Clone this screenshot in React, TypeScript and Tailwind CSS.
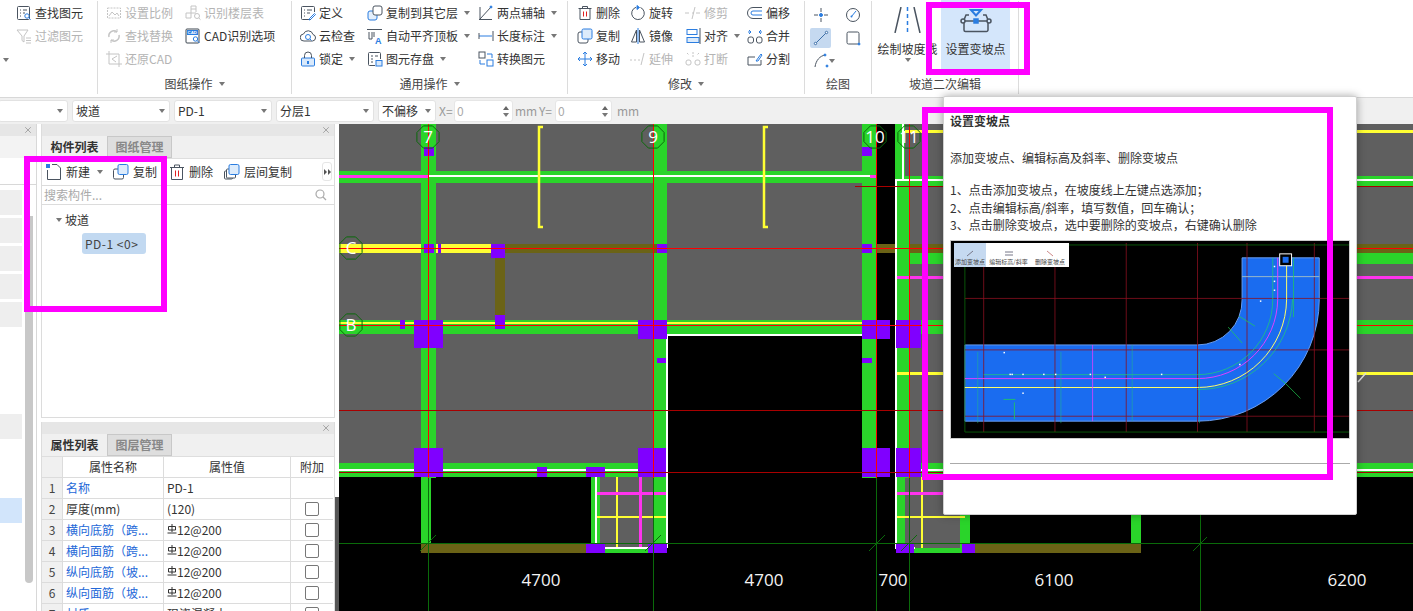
import type { ReactNode } from "react";
import { X } from "lucide-react";

const Caret = ({ className = "" }: { className?: string }) => (
  <span className={`inline-block w-0 h-0 border-x-[3px] border-t-[4px] border-x-transparent border-t-[#777] ${className}`} />
);

const Ic = ({ children }: { children: ReactNode }) => (
  <svg className="w-4 h-4 shrink-0" viewBox="0 0 16 16" fill="none" stroke="#4a5460" strokeWidth="1">
    {children}
  </svg>
);

const OFF = "#c4c4c4";
const BLUE = "#2b7de0";

// ribbon icons
const icons: Record<string, ReactNode> = {
  find: (
    <Ic>
      <rect x="1.5" y="1.5" width="12" height="13" rx="1" />
      <path d="M4 5h1M7 5h4M4 8h1M7 8h2M4 11h1" />
      <circle cx="11" cy="11" r="2.2" stroke={BLUE} />
      <path d="M12.6 12.6l2 2" stroke={BLUE} />
    </Ic>
  ),
  filter: (
    <Ic>
      <path d="M1 2h11L8 8v6l-2-1.5V8z" stroke={OFF} />
      <path d="M10 10h5M10 12.500h5M10 15h5" stroke={OFF} />
    </Ic>
  ),
  scale: (
    <Ic>
      <rect x="1.500" y="3" width="13" height="10" stroke={OFF} strokeDasharray="2 1" />
      <path d="M3 11l3-4 3 3 2-2 2 3" stroke={OFF} />
    </Ic>
  ),
  replace: (
    <Ic>
      <path d="M3 9a5 5 0 0 1 8-5M13 7a5 5 0 0 1-8 5" stroke={OFF} strokeWidth="1.500" />
      <path d="M11 1v3H8M5 15v-3h3" stroke={OFF} />
    </Ic>
  ),
  restore: (
    <Ic>
      <path d="M3 0v13h13M0 3h13v13" stroke={OFF} />
      <path d="M11 5L6 8l4 3" stroke={OFF} />
    </Ic>
  ),
  floors: (
    <Ic>
      <path d="M6 1h5v6M6 1v12H1V8h10M6 4h5" stroke={OFF} />
      <circle cx="12" cy="11" r="2.500" stroke={OFF} />
      <path d="M13.800 13l1.700 1.700" stroke={OFF} />
    </Ic>
  ),
  cad: (
    <Ic>
      <rect x="1" y="1" width="13" height="14" rx="1" stroke="#3c4650" />
      <rect x="2" y="2" width="11" height="5" fill={BLUE} stroke="none" />
      <text x="2.500" y="6.200" fontSize="4.400" fill="#fff" stroke="none" fontFamily="Liberation Sans, sans-serif" fontWeight="700">CAD</text>
      <circle cx="10.500" cy="11" r="2.200" stroke={BLUE} />
      <path d="M12 12.500l2.500 2.500" stroke={BLUE} />
    </Ic>
  ),
  define: (
    <Ic>
      <path d="M11 14.500H2.500a1 1 0 0 1-1-1v-11a1 1 0 0 1 1-1h11a1 1 0 0 1 1 1V7" />
      <path d="M4 5h1M7 5h5M4 8h1M7 8h3M4 11h1" />
      <path d="M9.500 13.500l5-5 1 1-5 5-1.500.5z" stroke={BLUE} />
    </Ic>
  ),
  cloud: (
    <Ic>
      <path d="M4 13a3.500 3.500 0 0 1-.5-7A5 5 0 0 1 13 6.500a3.300 3.300 0 0 1-.5 6.500z" />
      <circle cx="8" cy="9" r="2.500" stroke={BLUE} />
      <path d="M10 11l1.500 1.500" stroke={BLUE} />
    </Ic>
  ),
  lock: (
    <Ic>
      <rect x="1.500" y="7" width="13" height="8" rx="1" fill="#d9e9fb" stroke={BLUE} />
      <path d="M4.500 7V4.500a3.500 3.500 0 0 1 7 0V7" />
      <rect x="7" y="10" width="2" height="3" fill={BLUE} stroke="none" />
    </Ic>
  ),
  copyLayer: (
    <Ic>
      <rect x="1" y="6" width="9" height="9" rx="2" stroke={BLUE} fill="#e3effc" />
      <rect x="6" y="1" width="9" height="9" rx="2" fill="#fff" />
    </Ic>
  ),
  align: (
    <Ic>
      <path d="M0 1.500h15" />
      <path d="M2 4v7h3V4M7 4v5" />
      <text x="8" y="15.500" fontSize="9" fill={BLUE} stroke="none" fontWeight="700" fontFamily="Liberation Sans, sans-serif">A</text>
    </Ic>
  ),
  save: (
    <Ic>
      <path d="M8 14.500H2.500a1 1 0 0 1-1-1v-11a1 1 0 0 1 1-1h10a1 1 0 0 1 1 1V8" />
      <path d="M4 5h2M8 5h3M4 8h2M4 11h2" />
      <rect x="9" y="9.500" width="6" height="5.500" stroke={BLUE} fill="#d9e9fb" />
    </Ic>
  ),
  axis: (
    <Ic>
      <path d="M2 14L13 2M1 14.500h13M2 2v12" />
      <circle cx="13" cy="2" r="1" fill={BLUE} stroke={BLUE} />
    </Ic>
  ),
  dim: (
    <Ic>
      <path d="M1 8h13" stroke={BLUE} />
      <path d="M1 5v6M15 3v10" />
    </Ic>
  ),
  convert: (
    <Ic>
      <rect x="1" y="1" width="6" height="6" />
      <rect x="9" y="9" width="6" height="6" stroke={BLUE} />
      <path d="M9 3h5v4M7 13H2V9" stroke={BLUE} />
    </Ic>
  ),
  del: (
    <Ic>
      <path d="M1.500 3.500h13M5.500 3.500V1.500h5v2M3 3.500v11h10v-11" />
      <path d="M6.500 6.500v5M9.500 6.500v5" stroke="#e02020" />
    </Ic>
  ),
  copy: (
    <Ic>
      <rect x="1" y="4" width="10" height="11" rx="2" />
      <rect x="5" y="1" width="10" height="10" rx="1.500" stroke={BLUE} fill="#dcebfb" />
    </Ic>
  ),
  move: (
    <Ic>
      <path d="M8 1v14M1 8h14M6 3l2-2 2 2M6 13l2 2 2-2M3 6L1 8l2 2M13 6l2 2-2 2" stroke={BLUE} />
    </Ic>
  ),
  rotate: (
    <Ic>
      <path d="M6 2.300A6.300 6.300 0 1 0 10.500 2.500" />
      <path d="M7 0.500v4L9.500 2.500z" fill={BLUE} stroke={BLUE} />
    </Ic>
  ),
  mirror: (
    <Ic>
      <path d="M6.500 2L1.500 14h5zM9.500 2l5 12h-5z" />
      <path d="M8 0v16" stroke={BLUE} />
    </Ic>
  ),
  extend: (
    <Ic>
      <path d="M0 9h2M4 9h2M8 9h2" stroke={OFF} />
      <path d="M11 14l3-12" stroke={OFF} />
    </Ic>
  ),
  trim: (
    <Ic>
      <path d="M0 8h4M7 8h2M11 8h4" stroke={OFF} />
      <path d="M7 14l3-12" stroke={OFF} />
    </Ic>
  ),
  alignB: (
    <Ic>
      <rect x="2" y="1.500" width="10" height="5" stroke={BLUE} />
      <rect x="2" y="9.500" width="12" height="5" stroke={BLUE} fill="#dcebfb" />
      <path d="M15 0v16" stroke="#4a5460" />
    </Ic>
  ),
  breakI: (
    <Ic>
      <rect x="1" y="9" width="5" height="5" rx="2" stroke={OFF} />
      <rect x="10" y="9" width="5" height="5" rx="2" stroke={OFF} />
      <path d="M2 2l2 2M14 2l-2 2M8 1v6" stroke={OFF} strokeDasharray="2 1" />
    </Ic>
  ),
  offset: (
    <Ic>
      <path d="M15 2.500H6a5.500 5.500 0 0 0 0 11h9" />
      <path d="M15 6H6a2 2 0 0 0 0 4h9" stroke={BLUE} />
    </Ic>
  ),
  merge: (
    <Ic>
      <rect x="1" y="9" width="5.500" height="6" rx="2" />
      <rect x="9.500" y="9" width="5.500" height="6" rx="2" />
      <path d="M2 2l2 2-2 2M14 2l-2 2 2 2M4 4H1M12 4h3" stroke={BLUE} />
    </Ic>
  ),
  split: (
    <Ic>
      <path d="M14 9v5H1V6h7" />
      <path d="M9 10l5-7 1 1-4 6z" stroke={BLUE} />
    </Ic>
  ),
};

const Item = ({ icon, label, caret, off }: { icon: string; label: string; caret?: boolean; off?: boolean }) => (
  <div className={`flex items-center h-[23px] whitespace-nowrap ${off ? "text-[#b4b4b4]" : "text-[#333]"}`}>
    {icons[icon]}
    <span className="ml-[3px]">{label}</span>
    {caret && <Caret className="ml-[6px]" />}
  </div>
);

const GroupLabel = ({ text, caret = true }: { text: string; caret?: boolean }) => (
  <div className="absolute left-0 right-0 bottom-[1px] flex items-center justify-center gap-[6px] text-[#444]">
    <span>{text}</span>
    {caret && <Caret />}
  </div>
);

const Group = ({ width, children, label, caret }: { width: string; children: ReactNode; label: string; caret?: boolean }) => (
  <div className={`relative h-[93px] mt-[1px] border-r border-[#dcdcdc] ${width}`}>
    {children}
    {label && <GroupLabel text={label} caret={caret} />}
  </div>
);

function Ribbon() {
  return (
    <div className="flex h-[98px] bg-white border-b border-[#d8d8d8] shrink-0">
      <Group width="w-[98px]" label="">
        <div className="pl-[16px]">
          <Item icon="find" label="查找图元" />
          <Item icon="filter" label="过滤图元" off />
          <Caret className="absolute left-[3px] top-[57px]" />
        </div>
      </Group>
      <Group width="w-[194px]" label="图纸操作">
        <div className="flex pl-[8px]">
          <div className="w-[79px]">
            <Item icon="scale" label="设置比例" off />
            <Item icon="replace" label="查找替换" off />
            <Item icon="restore" label="还原CAD" off />
          </div>
          <div>
            <Item icon="floors" label="识别楼层表" off />
            <Item icon="cad" label="CAD识别选项" />
          </div>
        </div>
      </Group>
      <Group width="w-[276px]" label="通用操作">
        <div className="flex pl-[8px]">
          <div className="w-[67px]">
            <Item icon="define" label="定义" />
            <Item icon="cloud" label="云检查" />
            <Item icon="lock" label="锁定" caret />
          </div>
          <div className="w-[111px]">
            <Item icon="copyLayer" label="复制到其它层" caret />
            <Item icon="align" label="自动平齐顶板" caret />
            <Item icon="save" label="图元存盘" caret />
          </div>
          <div>
            <Item icon="axis" label="两点辅轴" caret />
            <Item icon="dim" label="长度标注" caret />
            <Item icon="convert" label="转换图元" />
          </div>
        </div>
      </Group>
      <Group width="w-[237px]" label="修改">
        <div className="flex pl-[9px]">
          <div className="w-[53px]">
            <Item icon="del" label="删除" />
            <Item icon="copy" label="复制" />
            <Item icon="move" label="移动" />
          </div>
          <div className="w-[55px]">
            <Item icon="rotate" label="旋转" />
            <Item icon="mirror" label="镜像" />
            <Item icon="extend" label="延伸" off />
          </div>
          <div className="w-[62px]">
            <Item icon="trim" label="修剪" off />
            <Item icon="alignB" label="对齐" caret />
            <Item icon="breakI" label="打断" off />
          </div>
          <div>
            <Item icon="offset" label="偏移" />
            <Item icon="merge" label="合并" />
            <Item icon="split" label="分割" />
          </div>
        </div>
      </Group>
      <Group width="w-[67px]" label="绘图" caret={false}>
        <div className="grid grid-cols-[21px_21px] gap-x-[11px] pl-[5px] pt-[2px]">
          <div className="h-[23px] flex items-center justify-center">
            <svg className="w-4 h-4" viewBox="0 0 16 16" fill="none" stroke="#4a5460">
              <path d="M8 1v4M8 11v4M1 8h4M11 8h4" />
              <circle cx="8" cy="8" r="1.500" fill={BLUE} stroke={BLUE} />
            </svg>
          </div>
          <div className="h-[23px] flex items-center justify-center">
            <svg className="w-4 h-4" viewBox="0 0 16 16" fill="none" stroke="#4a5460">
              <circle cx="8" cy="8" r="6.500" />
              <path d="M6.500 9.500L11 4" stroke={BLUE} />
              <circle cx="6.500" cy="9.500" r="1" fill={BLUE} stroke="none" />
            </svg>
          </div>
          <div className="h-[20px] mt-[2px] mb-[1px] flex items-center justify-center bg-[#c5d9f0] rounded-[2px]">
            <svg className="w-4 h-4" viewBox="0 0 16 16" fill="none" stroke="#3d6fa8">
              <path d="M2.500 13.500l11-11" />
              <circle cx="2.500" cy="13.500" r="1.200" fill="#fff" />
              <circle cx="13.500" cy="2.500" r="1.200" fill="#fff" />
            </svg>
          </div>
          <div className="h-[23px] flex items-center justify-center">
            <svg className="w-4 h-4" viewBox="0 0 16 16" fill="none" stroke="#4a5460">
              <rect x="2" y="2" width="12" height="12" rx="1.500" />
              <circle cx="14" cy="14" r="1" fill={BLUE} stroke={BLUE} />
            </svg>
          </div>
          <div className="relative h-[23px] flex items-center justify-center">
            <svg className="w-4 h-4" viewBox="0 0 16 16" fill="none" stroke="#4a5460">
              <path d="M2 14C3 7 7 3 12 2" />
              <circle cx="12" cy="2" r="1" fill={BLUE} stroke={BLUE} />
              <circle cx="14" cy="13" r="1" fill={BLUE} stroke={BLUE} />
            </svg>
            <Caret className="absolute -right-[4px] top-[10px]" />
          </div>
        </div>
      </Group>
      <Group width="w-[147px]" label="坡道二次编辑" caret={false}>
        <div className="flex pl-[2px]">
          <div className="w-[67px] flex flex-col items-center pt-[6px]">
            <svg className="w-[28px] h-[26px]" viewBox="0 0 28 26" fill="none" stroke="#4a5460" strokeWidth="1.500">
              <path d="M7 0L1 26M20 0L26 26" />
              <path d="M13.500 0v26" stroke={BLUE} strokeDasharray="4 3" />
            </svg>
            <span className="mt-[8px] text-[#333] leading-[16px]">绘制坡度线</span>
            <Caret className="mt-[1px]" />
          </div>
          <div className="w-[69px] h-[70px] -mt-[1px] bg-[#d4e6fb] flex flex-col items-center pt-[7px]">
            <svg className="w-[32px] h-[26px]" viewBox="0 0 32 26" fill="none" stroke="#4a5460" strokeWidth="1.500">
              <path d="M11 3h10l-5 5.500z" fill="#d4e6fb" stroke={BLUE} strokeWidth="2" />
              <path d="M9 8H6L4 13v10a1.500 1.500 0 0 0 1.500 1.500h21A1.500 1.500 0 0 0 28 23V13L26 8h-3" />
              <path d="M4 14h24" />
              <circle cx="3" cy="14" r="2" fill="#d4e6fb" />
              <circle cx="29" cy="14" r="2" fill="#d4e6fb" />
              <rect x="14" y="12" width="4" height="4" fill={BLUE} stroke={BLUE} />
            </svg>
            <span className="mt-[8px] text-[#333] leading-[16px]">设置变坡点</span>
          </div>
        </div>
      </Group>
    </div>
  );
}

const Combo = ({ width, text }: { width: string; text: string }) => (
  <div className={`h-[22px] bg-white border border-[#e2e2e2] rounded-[3px] flex items-center justify-between px-[3px] text-[#333] ${width}`}>
    <span className="whitespace-nowrap">{text}</span>
    <Caret className="mr-[1px] border-t-[#555]" />
  </div>
);

const Spin = ({ width }: { width: string }) => (
  <div className={`h-[22px] bg-white border border-[#e6e6e6] rounded-[3px] flex items-center justify-between pl-[2px] pr-[3px] text-[#aaa] ${width}`}>
    <span>0</span>
    <span className="flex flex-col gap-[3px]">
      <span className="w-0 h-0 border-x-[3px] border-b-[4px] border-x-transparent border-b-[#666]" />
      <Caret className="border-t-[#666]" />
    </span>
  </div>
);

function OptionsBar() {
  return (
    <div className="flex items-center h-[26px] bg-[#f0f0f0] shrink-0 text-[#999]">
      <Combo width="w-[70px] -ml-[2px]" text="" />
      <Combo width="w-[98px] ml-[4px]" text="坡道" />
      <Combo width="w-[98px] ml-[4px]" text="PD-1" />
      <Combo width="w-[98px] ml-[4px]" text="分层1" />
      <Combo width="w-[58px] ml-[4px]" text="不偏移" />
      <span className="ml-[3px] w-[15px]">X=</span>
      <Spin width="w-[59px]" />
      <span className="ml-[2px] w-[24px]">mm</span>
      <span className="w-[16px]">Y=</span>
      <Spin width="w-[57px]" />
      <span className="ml-[5px]">mm</span>
    </div>
  );
}

const PanelHead = () => (
  <div className="h-[12px] bg-[#e6e6e6] flex items-center justify-end pr-[3px]">
    <X className="w-[10px] h-[10px] text-[#999]" strokeWidth={2} />
  </div>
);

const Tabs = ({ a, b }: { a: string; b: string }) => (
  <div className="h-[23px] bg-[#f0f0f0] flex border-b border-[#dedede]">
    <div className="w-[65px] font-bold text-[#333] flex items-center justify-center">{a}</div>
    <div className="w-[65px] bg-[#dedede] border border-[#c8c8c8] text-[#888] font-bold flex items-center justify-center">{b}</div>
  </div>
);

const LEFT_ROWS = ["mt-[5px]", "mt-[3px]", "mt-[3px]", "mt-[3px]", "mt-[3px]"];

function LeftPanel() {
  return (
    <div className="w-[37px] border-r border-[#d8d8d8] shrink-0 h-full">
      <PanelHead />
      <div className="h-[22px] bg-[#f3f3f3]" />
      <div className="h-[27px] bg-white border-b border-[#d8d8d8]" />
      <div className="flex">
        <div className="w-[22px]">
          {LEFT_ROWS.map((m, i) => (
            <div key={i} className={`h-[25px] bg-[#eeeeee] ${m}`} />
          ))}
          <div className="h-[25px] bg-[#eeeeee] mt-[87px]" />
          <div className="h-[25px] bg-[#d2e5fb] mt-[59px]" />
        </div>
        <div className="w-[8px] h-[367px] ml-[3px] mt-[31px] bg-[#c8c8c8] rounded-b-[4px]" />
      </div>
    </div>
  );
}

function ListPanel() {
  return (
    <div className="h-[294px] flex flex-col border-x border-b border-[#dcdcdc]">
      <PanelHead />
      <Tabs a="构件列表" b="图纸管理" />
      <div className="relative h-[27px] flex items-center pl-[4px] border-b border-[#dcdcdc] text-[#333] whitespace-nowrap">
        <svg className="w-[16px] h-[16px]" viewBox="0 0 16 16" fill="none" stroke="#4a5460">
          <path d="M1.500 6v9.500h13V4L11 .5H6" />
          <rect x="0" y="0" width="4" height="4" fill={BLUE} stroke="none" />
        </svg>
        <span className="ml-[4px]">新建</span>
        <Caret className="ml-[7px]" />
        <svg className="w-[16px] h-[16px] ml-[10px]" viewBox="0 0 16 16" fill="none" stroke="#4a5460">
          <rect x="0.500" y="5" width="10" height="10" rx="1.500" />
          <rect x="5" y="0.500" width="10" height="10" rx="1.500" stroke={BLUE} fill="#dcebfb" />
        </svg>
        <span className="ml-[4px]">复制</span>
        <svg className="w-[14px] h-[16px] ml-[13px]" viewBox="0 0 14 16" fill="none" stroke="#4a5460">
          <path d="M0 3.500h14M4.500 3.500V1h5v2.500M1.500 3.500v12h11v-12" />
          <path d="M5.500 6.500v6M8.500 6.500v6" stroke="#e02020" />
        </svg>
        <span className="ml-[5px]">删除</span>
        <svg className="w-[16px] h-[16px] ml-[11px]" viewBox="0 0 16 16" fill="none" stroke="#4a5460">
          <rect x="0.500" y="7" width="8" height="8" rx="1" />
          <rect x="2.500" y="5" width="9" height="9" rx="1" fill="#fff" />
          <rect x="5" y="0.500" width="10" height="10" rx="1.500" stroke={BLUE} fill="#dcebfb" />
        </svg>
        <span className="ml-[4px]">层间复制</span>
        <div className="absolute right-[2px] top-[3px] w-[10px] h-[19px] bg-white border border-[#e6e6e6] rounded-[3px] flex items-center justify-center gap-[1px]">
          <span className="w-0 h-0 border-y-[3px] border-l-[3px] border-y-transparent border-l-[#555]" />
          <span className="w-0 h-0 border-y-[3px] border-l-[3px] border-y-transparent border-l-[#555]" />
        </div>
      </div>
      <div className="h-[19px] flex items-center justify-between pl-[2px] pr-[7px] border-b border-[#dcdcdc] text-[#aaa] whitespace-nowrap">
        <span>搜索构件...</span>
        <svg className="w-[12px] h-[12px]" viewBox="0 0 12 12" fill="none" stroke="#aaa" strokeWidth="1.200">
          <circle cx="5" cy="5" r="4" />
          <path d="M8 8l3 3" />
        </svg>
      </div>
      <div className="flex items-center h-[17px] mt-[6px] pl-[14px] text-[#333]">
        <Caret className="mr-[3px]" />
        <span>坡道</span>
      </div>
      <div className="mt-[5px] ml-[40px] w-[64px] h-[21px] bg-[#c2d9f1] rounded-[3px] flex items-center pl-[3px] text-[#444] whitespace-pre tracking-[0.5px]">
        PD-1 &lt;0&gt;
      </div>
    </div>
  );
}

const Rebar = () => (
  <svg className="w-[10px] h-[10px] -mt-[3px] mr-[0px]" viewBox="0 0 10 10" fill="none" stroke="#333">
    <path d="M1.500 6V2.500h7V6zM5 0v8M0.500 9h9" />
  </svg>
);

const rows: { name: string; value: string; link: boolean; rebar?: boolean; box: boolean }[] = [
  { name: "名称", value: "PD-1", link: true, box: false },
  { name: "厚度(mm)", value: "(120)", link: false, box: true },
  { name: "横向底筋（跨...", value: "12@200", link: true, rebar: true, box: true },
  { name: "横向面筋（跨...", value: "12@200", link: true, rebar: true, box: true },
  { name: "纵向底筋（坡...", value: "12@200", link: true, rebar: true, box: true },
  { name: "纵向面筋（坡...", value: "12@200", link: true, rebar: true, box: true },
  { name: "材质", value: "现浇混凝土", link: true, box: true },
];

function PropPanel() {
  return (
    <div className="mt-[4px] flex-1 overflow-hidden border-x border-[#dcdcdc]">
      <PanelHead />
      <Tabs a="属性列表" b="图层管理" />
      <div className="w-[291px] text-[#333]">
        <div className="grid grid-cols-[21px_101px_127px_42px] h-[21px] border-b border-[#dcdcdc]">
          <div className="bg-[#f0f0f0] border-r border-[#dcdcdc]" />
          <div className="border-r border-[#dcdcdc] flex items-center justify-center">属性名称</div>
          <div className="border-r border-[#dcdcdc] flex items-center justify-center">属性值</div>
          <div className="flex items-center justify-center">附加</div>
        </div>
        {rows.map((r, i) => (
          <div key={r.name} className="grid grid-cols-[21px_101px_127px_42px] h-[21px] border-b border-[#dcdcdc]">
            <div className="bg-[#f0f0f0] border-r border-[#dcdcdc] flex items-center justify-center text-[#444]">{i + 1}</div>
            <div className={`border-r border-[#dcdcdc] flex items-center pl-[3px] whitespace-nowrap ${r.link ? "text-[#2468d8]" : "text-[#333]"}`}>{r.name}</div>
            <div className="border-r border-[#dcdcdc] flex items-center pl-[3px] whitespace-nowrap">
              {r.rebar && <Rebar />}
              {r.value}
            </div>
            <div className="flex items-center justify-center">
              {r.box && <span className="w-[14px] h-[14px] border border-[#777] rounded-[2px] bg-white" />}
            </div>
          </div>
        ))}
      </div>
    </div>
  );
}

type Box = [number, number, number, number];

const GRAY: Box[] = [[339, 124, 523, 211], [339, 335, 328, 135], [895, 124, 518, 339], [600, 477, 53, 71], [905, 477, 60, 71]];
const GREEN: Box[] = [
  [421, 124, 15, 354], [653, 124, 14, 354], [862, 124, 15, 354], [895, 124, 10, 56], [896, 181, 14, 297],
  [339, 171, 538, 12], [339, 320, 538, 14], [895, 320, 518, 14], [895, 176, 518, 10], [339, 463, 328, 14],
  [895, 463, 518, 14], [421, 477, 10, 71], [591, 477, 9, 71], [653, 477, 14, 71], [896, 477, 9, 71],
  [605, 548, 43, 5], [914, 548, 48, 5], [1131, 515, 10, 33], [910, 252, 503, 12], [960, 477, 10, 71],
];
const OLIVE: Box[] = [[491, 244, 171, 9], [877, 244, 18, 9], [910, 244, 503, 9], [495, 258, 10, 57], [421, 543, 165, 10], [975, 544, 166, 9]];
const YELLOW: Box[] = [
  [339, 244, 82, 9], [436, 244, 55, 9], [905, 130, 508, 3], [339, 322, 538, 2], [895, 372, 518, 3],
  [616, 477, 2, 71], [921, 477, 2, 71], [595, 516, 72, 2], [895, 516, 70, 2],
];
const PINK: Box[] = [[339, 175, 89, 3], [870, 175, 7, 3], [895, 276, 518, 3], [595, 492, 73, 3], [895, 492, 70, 3], [639, 477, 3, 71]];
const WHITE: Box[] = [
  [428, 175, 442, 2], [667, 334, 210, 2], [666, 335, 2, 213], [895, 179, 518, 2], [902, 124, 2, 56], [895, 181, 2, 367],
  [339, 469, 328, 2], [895, 469, 518, 2], [595, 470, 2, 78], [595, 547, 55, 2], [895, 547, 20, 2],
];
const PURPLE: Box[] = [
  [424, 147, 10, 9], [862, 147, 10, 9], [424, 244, 10, 9], [438, 244, 3, 9], [491, 244, 14, 14], [657, 244, 10, 9], [862, 244, 10, 9],
  [414, 320, 29, 28], [400, 320, 5, 9], [495, 315, 10, 14], [638, 320, 29, 19], [657, 358, 9, 5], [862, 320, 28, 19], [862, 358, 10, 5], [896, 320, 25, 28],
  [414, 448, 29, 29], [638, 448, 28, 29], [862, 448, 28, 29], [896, 448, 25, 29], [537, 467, 10, 10], [586, 467, 19, 10],
  [586, 543, 19, 10], [648, 543, 19, 10], [896, 543, 18, 10], [962, 543, 13, 10],
];

const paint = (list: Box[], fill: string) =>
  list.map(([x, y, w, h], i) => <rect key={fill + i} x={x} y={y} width={w} height={h} fill={fill} />);

const octagon = (cx: number, cy: number, r: number) =>
  Array.from({ length: 8 }, (_, i) => {
    const a = Math.PI / 8 + (i * Math.PI) / 4;
    return `${cx + r * Math.cos(a)},${cy + r * Math.sin(a)}`;
  }).join(" ");

const AXES: [string, number, number][] = [["7", 428, 137], ["9", 653, 137], ["10", 875, 137], ["11", 909, 137], ["C", 351, 248], ["B", 351, 325]];
const DIMS: [string, number][] = [["4700", 541], ["4700", 764], ["700", 893], ["6100", 1054], ["6200", 1347]];

function Canvas() {
  return (
    <svg className="flex-1 h-full block bg-black" viewBox="339 124 1074 487" fontFamily="'Open Sans', 'Noto Sans', sans-serif">
      {paint(GRAY, "#5f5f5f")}
      {paint(GREEN, "#2ad42a")}
      {paint(OLIVE, "#6b6316")}
      {paint(YELLOW, "#ffff33")}
      {paint(PINK, "#ff33ee")}
      {paint(WHITE, "#ffffff")}
      {paint(PURPLE, "#8000ff")}
      <g fill="none" stroke="#ffff33" strokeWidth="2.500">
        <path d="M543 127h-4v100h4M768 127h-4v100h4" />
      </g>
      <g stroke="#ff0000" strokeWidth="1">
        <path d="M428.500 124v354M653.500 124v354M876.500 124v354M909.500 124v354M339 248.500h1074M339 325.500h1074" />
      </g>
      <g stroke="#a80000" strokeWidth="1">
        <path d="M855 186.500h558M339 410.500h1074M339 472.500h1074" />
      </g>
      <g stroke="#0a6a0a" strokeWidth="1" fill="none">
        <path d="M428.500 478v133M653.500 478v133M876.500 478v133M909.500 478v133M1200.500 478v133M339 543.500h1074" />
        <path d="M420 551l16-16M645 551l16-16M869 551l16-16M901 551l16-16M1193 551l14-14" />
        {AXES.map(([t, x, y]) => (
          <polygon key={t} points={octagon(x, y, 12)} />
        ))}
      </g>
      <path d="M1358 382l8-9" stroke="#ddd" strokeWidth="1.500" />
      {AXES.map(([t, x, y]) => (
        <text key={t} x={x} y={y + 6} textAnchor="middle" fontSize="17" fill="#fff">{t}</text>
      ))}
      {DIMS.map(([t, x], i) => (
        <text key={i} x={x} y={586} textAnchor="middle" fontSize="17" fill="#f4f4f4">{t}</text>
      ))}
    </svg>
  );
}

const DOTS: [number, number][] = [[1002, 353], [1008, 375], [1010, 375], [1021, 375], [1042, 375], [1054, 375], [1089, 375], [1104, 378], [1161, 375], [1021, 394], [1261, 301], [1275, 266], [1275, 281], [1275, 290], [1240, 365]];

function RampPreview() {
  return (
    <div className="relative mt-[6px] h-[199px] border border-[#cccccc] bg-black overflow-hidden">
      <svg className="block w-full h-full" viewBox="949 241 402 199" fill="none">
        <path d="M963 346H1198A45 45 0 0 0 1243 300V258H1321V300A123 123 0 0 1 1198 423H963Z" fill="#1a6cf0" stroke="#6a9ef0" />
        <path d="M982 243v191M1054 243v191M1126 243v191M1198 243v191M1248 243v191M1316 243v191M963 299h393M963 351h393M963 418h393" stroke="#8a1020" strokeWidth="0.800" />
        <path d="M963 245h393M963 245v189M963 434h393" stroke="#0a6a0a" strokeWidth="0.800" />
        <path d="M1243 277h78" stroke="#9ab8c8" strokeWidth="1" />
        <path d="M963 380H1198A81 81 0 0 0 1279 300V258" stroke="#e040ff" strokeWidth="1" />
        <path d="M963 389H1198A90 90 0 0 0 1288 300V258" stroke="#ffff66" strokeWidth="1" />
        <path d="M982 376H1198A76 76 0 0 0 1274 300V258" stroke="#20d070" strokeWidth="0.700" />
        <path d="M1198 391A95 95 0 0 0 1294 300" stroke="#20d070" strokeWidth="0.700" />
        <path d="M976 353v72M1060 353v72M1132 346v77M1200 353v72" stroke="#20c080" strokeWidth="0.500" />
        <path d="M1092 346v77" stroke="#e040ff" strokeWidth="0.800" />
        <path d="M1295 258v60M1240 317l16 10M1229 328l14 16M1287 385l-12 -10M1302 400l-16 -16" stroke="#20d050" strokeWidth="0.700" />
        <path d="M1002 401h12M1013 404v17" stroke="#20d050" strokeWidth="0.800" />
        {DOTS.map(([x, y]) => (
          <rect key={`${x}-${y}`} x={x} y={y} width="1.500" height="1.500" fill="#fff" />
        ))}
        <rect x="1281" y="254" width="12" height="12" fill="#000" stroke="#fff" />
        <rect x="1284" y="257" width="6" height="6" fill="#1a6cf0" />
      </svg>
      <div className="absolute left-[3px] top-[2px] w-[115px] h-[24px] bg-white flex text-[6px] leading-none text-[#444]">
        <div className="w-[32px] bg-[#c5d9f0] flex flex-col items-center justify-end gap-[2px] pb-[2px] whitespace-nowrap overflow-hidden">
          <svg className="w-[8px] h-[7px]" viewBox="0 0 8 7" fill="none" stroke="#778">
            <path d="M1 6l6-5" />
          </svg>
          添加变坡点
        </div>
        <div className="flex-1 flex flex-col items-center justify-end gap-[2px] pb-[2px] whitespace-nowrap">
          <svg className="w-[10px] h-[7px]" viewBox="0 0 10 7" fill="none" stroke="#778">
            <path d="M1 2h8M1 5h8" />
          </svg>
          编辑标高/斜率
        </div>
        <div className="w-[38px] flex flex-col items-center justify-end gap-[2px] pb-[2px] whitespace-nowrap">
          <svg className="w-[8px] h-[7px]" viewBox="0 0 8 7" fill="none" stroke="#c88">
            <path d="M1 1l6 5" />
          </svg>
          删除变坡点
        </div>
      </div>
    </div>
  );
}

function HelpTip() {
  return (
    <div className="absolute left-[943px] top-[96px] w-[414px] h-[419px] bg-white border border-[#d0d0d0] rounded-[2px] shadow-[0_0_8px_rgba(0,0,0,0.35)] px-[6px] pt-[15px] text-[#333]">
      <div className="font-bold leading-[17px]">设置变坡点</div>
      <div className="mt-[20px] leading-[17px]">添加变坡点、编辑标高及斜率、删除变坡点</div>
      <div className="mt-[15px] leading-[17.500px]">
        <div>1、点击添加变坡点，在坡度线上左键点选添加；</div>
        <div>2、点击编辑标高/斜率，填写数值，回车确认；</div>
        <div>3、点击删除变坡点，选中要删除的变坡点，右键确认删除</div>
      </div>
      <RampPreview />
      <div className="mt-[24px] border-t border-[#aaaaaa]" />
    </div>
  );
}

export default function App() {
  return (
    <div className="relative w-[1413px] h-[611px] overflow-hidden flex flex-col bg-white text-[12px] font-['Noto_Sans_CJK_SC','Noto_Sans',sans-serif]">
      <Ribbon />
      <OptionsBar />
      <div className="flex flex-1 min-h-0">
        <LeftPanel />
        <div className="w-[294px] ml-[4px] flex flex-col shrink-0">
          <ListPanel />
          <PropPanel />
        </div>
        <div className="w-[4px] shrink-0 flex flex-col">
          <div className="h-[373px]" />
          <div className="flex-1 bg-[#555]" />
        </div>
        <Canvas />
      </div>
      <HelpTip />
      <div className="absolute left-[926px] top-[2px] w-[104px] h-[73px] border-[6px] border-[#ff00ff] pointer-events-none" />
      <div className="absolute left-[922px] top-[107px] w-[411px] h-[373px] border-[6px] border-[#ff00ff] pointer-events-none" />
      <div className="absolute left-[24px] top-[156px] w-[143px] h-[156px] border-[6px] border-[#ff00ff] pointer-events-none" />
    </div>
  );
}
